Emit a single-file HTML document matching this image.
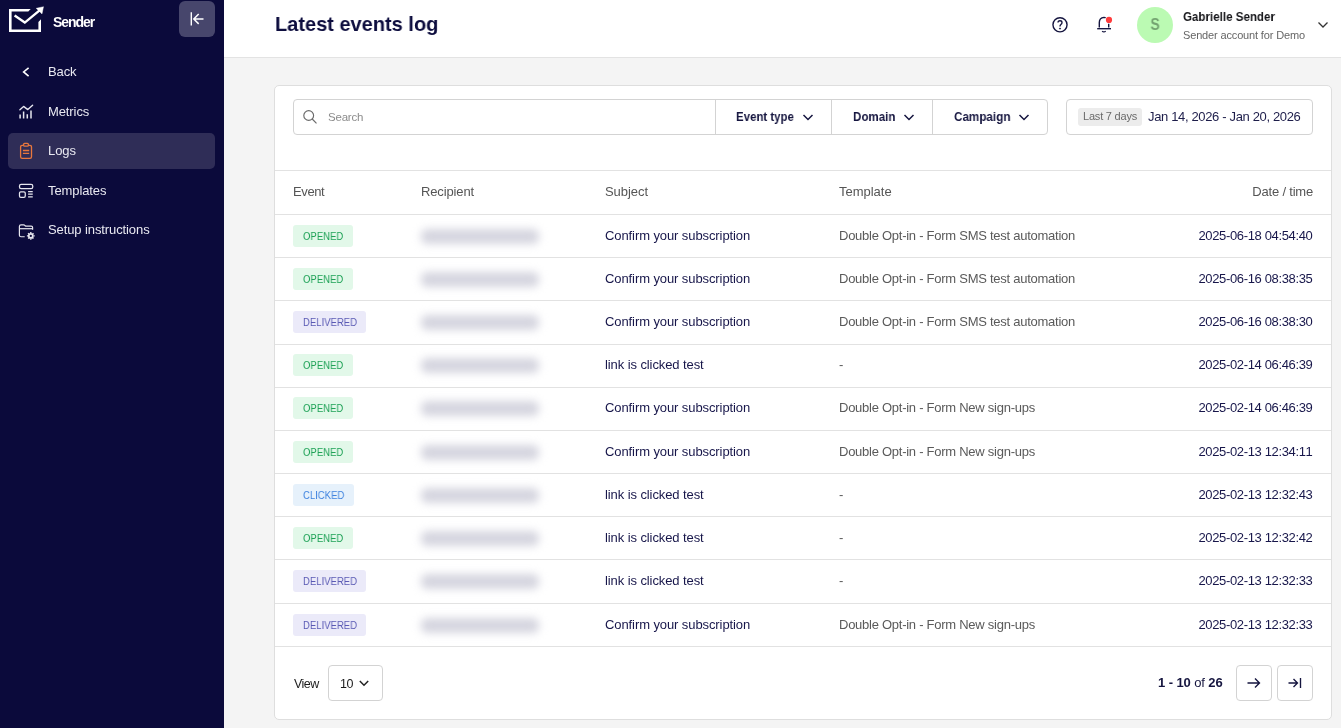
<!DOCTYPE html>
<html><head><meta charset="utf-8">
<style>
*{box-sizing:border-box;margin:0;padding:0}
html,body{width:1341px;height:728px;overflow:hidden;background:#f4f4f4;font-family:"Liberation Sans",sans-serif;font-variant-ligatures:none}
.a{position:absolute}
.t{position:absolute;white-space:nowrap;line-height:1;will-change:transform}
#side{position:absolute;left:0;top:0;width:224px;height:728px;background:#0b0a3b}
#hdr{position:absolute;left:224px;top:0;width:1117px;height:58px;background:#fff;border-bottom:1px solid #e3e3e3}
#card{position:absolute;left:274px;top:85px;width:1058px;height:635px;background:#fff;border:1px solid #dedede;border-radius:5px}
.nav{color:#e9e9f1;font-size:13px;letter-spacing:-0.1px}
.hl{position:absolute;left:275px;width:1056px;height:1px;background:#e2e2e2}
.th{color:#555;font-size:13px}
.sub{color:#17164a;font-size:13px;font-variant-ligatures:none}
.tpl{color:#5a5a5a;font-size:13px}
.dt{color:#17164a;font-size:13px;font-kerning:none}
.bd{position:absolute;left:293px;height:22px;border-radius:3px;font-size:11px;line-height:22px;padding:0 9.6px;white-space:nowrap}
.bd span{display:inline-block;transform:scaleX(0.865);transform-origin:0 50%;will-change:transform}
.op{background:#e2f8e9;color:#1fa257}
.dl{background:#ebeaf9;color:#5a5ab4}
.cl{background:#e6f1fb;color:#3f83df}
.blur{position:absolute;left:421px;width:118px;height:15px;background:#d5d5df;filter:blur(4px);border-radius:6px}
.btn{position:absolute;border:1px solid #d3d3d3;border-radius:4px;background:#fff}
.fl{color:#15153f;font-size:13px;font-weight:bold}
</style></head><body>

<div id="side">
  <!-- logo -->
  <svg class="a" style="left:0;top:0" width="100" height="40" viewBox="0 0 100 40">
    <path d="M9 9 H30.7 L28.3 11.6 H11.6 V29.4 H38.4 V21.9 L41 19.3 V32 H9 Z" fill="#fff"/>
    <path d="M14.6 15.6 L24.8 22.6 L40.8 9.4" fill="none" stroke="#fff" stroke-width="2.4"/>
    <path d="M36.2 8.3 L43.5 6.7 L42 13.9 Z" fill="#fff" stroke="#fff" stroke-width="0.4"/>
  </svg>
  <div class="t" style="left:53px;top:15px;font-size:14px;font-weight:bold;color:#fff;letter-spacing:-1.05px">Sender</div>
  <div class="a" style="left:179px;top:1px;width:36px;height:36px;background:#47466c;border-radius:6px"></div>
  <svg class="a" style="left:179px;top:1px" width="36" height="36" viewBox="0 0 36 36">
    <path d="M12.3 11.2 V24.6" stroke="#fff" stroke-width="1.4" fill="none"/>
    <path d="M14.8 18 H24.5 M19.7 12.9 L14.8 18 L19.7 22.9" stroke="#fff" stroke-width="1.5" fill="none"/>
  </svg>

  <div class="a" style="left:8px;top:133px;width:207px;height:36px;background:#2f2d57;border-radius:5px"></div>

  <svg class="a" style="left:18px;top:62px" width="18" height="18" viewBox="0 0 18 18"><path d="M10.6 5.9 L5.6 9.9 L10.6 14.1" stroke="#fff" stroke-width="1.55" fill="none"/></svg>
  <div class="t nav" style="left:48.2px;top:65px">Back</div>

  <svg class="a" style="left:18px;top:103px" width="18" height="18" viewBox="0 0 18 18" fill="none" stroke="#e6e6ee" stroke-width="1.4" stroke-linecap="round" stroke-linejoin="round">
    <path d="M1.9 6.7 L5.6 3.4 L9.8 6.6 L14.6 2.3"/>
    <path d="M2.1 11.4 V15.4 M5.6 8.4 V15.4 M9.3 11.2 V15.4 M13 7.6 V15.4" stroke-width="1.5" stroke-linecap="butt"/>
  </svg>
  <div class="t nav" style="left:48.2px;top:105px">Metrics</div>

  <svg class="a" style="left:18px;top:141px" width="18" height="20" viewBox="0 0 18 20" fill="none" stroke="#e8773d" stroke-width="1.3">
    <path d="M5.6 4.4 H4.2 Q2.6 4.4 2.6 6 V15.7 Q2.6 17.3 4.2 17.3 H11.9 Q13.5 17.3 13.5 15.7 V6 Q13.5 4.4 11.9 4.4 H10.2"/>
    <path d="M6.6 2.4 H9.4 Q10.4 2.4 10.4 3.4 V4.2 Q10.4 5.1 9.4 5.1 H6.6 Q5.6 5.1 5.6 4.2 V3.4 Q5.6 2.4 6.6 2.4 Z"/>
    <path d="M4.9 9.5 H11.2 M4.9 12.3 H11.2"/>
  </svg>
  <div class="t nav" style="left:48.2px;top:143.5px">Logs</div>

  <svg class="a" style="left:17px;top:181px" width="20" height="20" viewBox="0 0 20 20" fill="none" stroke="#e6e6ee" stroke-width="1.25">
    <rect x="2.5" y="3.4" width="13.25" height="4.1" rx="1.6"/>
    <rect x="2.5" y="10.75" width="5.75" height="5.55" rx="1.3"/>
    <path d="M11.1 10.5 H15.75 M11.1 13 H15.75 M11.1 15.75 H15.75"/>
  </svg>
  <div class="t nav" style="left:48.2px;top:184px">Templates</div>

  <svg class="a" style="left:17px;top:221px" width="22" height="22" viewBox="0 0 22 22" fill="none" stroke="#e6e6ee" stroke-width="1.2">
    <path d="M7.7 15.75 H4 Q2.4 15.75 2.4 14.2 V5.4 Q2.4 3.8 4 3.8 H6.6 Q7.4 3.8 7.9 4.5 L8.6 5.2 H14.2 Q15.6 5.2 15.6 6.6 V8.8"/>
    <path d="M2.4 7.7 H15.6"/>
    <circle cx="13.8" cy="14.9" r="2" stroke-width="1.7"/>
    <path d="M13.8 11 V12.2 M13.8 17.6 V18.8 M9.9 14.9 H11.1 M16.5 14.9 H17.7 M11.1 12.2 L11.9 13 M15.7 16.8 L16.5 17.6 M11.1 17.6 L11.9 16.8 M15.7 13 L16.5 12.2" stroke-width="1.4"/>
  </svg>
  <div class="t nav" style="left:48.2px;top:223px">Setup instructions</div>
</div>

<div id="hdr"></div>
<div class="t" style="left:275px;top:13px;font-size:21px;font-weight:bold;color:#0d0d3e;transform:scaleX(0.952);transform-origin:0 0">Latest events log</div>

<!-- header right -->
<svg class="a" style="left:1050px;top:15px" width="20" height="20" viewBox="0 0 20 20" fill="none" stroke="#15153f" stroke-width="1.4">
  <circle cx="10" cy="9.8" r="7.05"/>
  <path d="M8 7.6 Q8 5.7 10 5.7 Q12 5.7 12 7.5 Q12 8.7 10.9 9.5 Q10 10.2 10 11.6" stroke-width="1.35"/>
  <circle cx="10" cy="13.6" r="0.55" fill="#15153f" stroke-width="0.9"/>
</svg>
<svg class="a" style="left:1094px;top:15px" width="22" height="22" viewBox="0 0 22 22" fill="none" stroke="#15153f" stroke-width="1.4">
  <path d="M5.3 12.4 V7.6 Q5.3 2.7 10 2.4 Q14.7 2.7 14.7 7.6 V12.4"/>
  <path d="M3.2 13.7 H17"/>
  <path d="M8.1 16.2 Q9.9 17.5 11.7 16.2"/>
  <circle cx="15" cy="4.9" r="3.9" fill="#fff" stroke="none"/>
  <circle cx="15" cy="4.9" r="3.1" fill="#ff3b3b" stroke="none"/>
</svg>
<div class="a" style="left:1137px;top:7px;width:36px;height:36px;border-radius:50%;background:#bbfab3"></div>
<div class="t" style="left:1137px;top:17px;width:36px;text-align:center;font-size:16px;font-weight:bold;color:#74a371;transform:scaleX(0.87);transform-origin:50% 0">S</div>
<div class="t" style="left:1182.5px;top:10px;font-size:13px;font-weight:bold;color:#141418;transform:scaleX(0.89);transform-origin:0 0">Gabrielle Sender</div>
<div class="t" style="left:1182.5px;top:29.5px;font-size:11px;color:#666;letter-spacing:-0.15px">Sender account for Demo</div>
<svg class="a" style="left:1315px;top:18px" width="16" height="14" viewBox="0 0 16 14"><path d="M3.5 4.5 L8 9 L12.5 4.5" stroke="#333" stroke-width="1.3" fill="none"/></svg>

<div id="card"></div>

<!-- filter bar -->
<div class="btn" style="left:293px;top:99px;width:755px;height:36px"></div>
<div class="a" style="left:715px;top:100px;width:1px;height:34px;background:#d3d3d3"></div>
<div class="a" style="left:831px;top:100px;width:1px;height:34px;background:#d3d3d3"></div>
<div class="a" style="left:932px;top:100px;width:1px;height:34px;background:#d3d3d3"></div>
<svg class="a" style="left:300px;top:106px" width="22" height="22" viewBox="0 0 22 22" fill="none" stroke="#6a6a6a" stroke-width="1.15">
  <circle cx="8.7" cy="9.5" r="4.9"/><path d="M12.2 13 L16.5 17.3"/>
</svg>
<div class="t" style="left:328px;top:111.8px;font-size:11.5px;color:#8c8c8c;letter-spacing:-0.2px">Search</div>
<div class="t fl" style="left:736px;top:109.5px;transform:scaleX(0.881);transform-origin:0 0">Event type</div>
<div class="t fl" style="left:852.5px;top:109.5px;transform:scaleX(0.889);transform-origin:0 0">Domain</div>
<div class="t fl" style="left:953.5px;top:109.5px;transform:scaleX(0.898);transform-origin:0 0">Campaign</div>
<svg class="a" style="left:801px;top:110px" width="14" height="14" viewBox="0 0 14 14"><path d="M2.5 5 L7 9.5 L11.5 5" stroke="#15153f" stroke-width="1.5" fill="none"/></svg>
<svg class="a" style="left:902px;top:110px" width="14" height="14" viewBox="0 0 14 14"><path d="M2.5 5 L7 9.5 L11.5 5" stroke="#15153f" stroke-width="1.5" fill="none"/></svg>
<svg class="a" style="left:1017px;top:110px" width="14" height="14" viewBox="0 0 14 14"><path d="M2.5 5 L7 9.5 L11.5 5" stroke="#15153f" stroke-width="1.5" fill="none"/></svg>

<div class="btn" style="left:1066px;top:99px;width:247px;height:36px"></div>
<div class="a" style="left:1078px;top:108px;width:64px;height:18px;background:#ececec;border-radius:3px"></div>
<div class="t" style="left:1083px;top:111px;font-size:11px;color:#6a6a6a;letter-spacing:-0.2px">Last 7 days</div>
<div class="t" style="left:1148px;top:109.5px;font-size:13px;color:#1d1d4a;letter-spacing:-0.35px">Jan 14, 2026 - Jan 20, 2026</div>

<!-- table -->
<div class="hl" style="top:170px"></div>
<div class="hl" style="top:214px"></div>
<div class="t th" style="left:293px;top:185px;letter-spacing:-0.38px">Event</div>
<div class="t th" style="left:420.5px;top:185px;letter-spacing:-0.13px">Recipient</div>
<div class="t th" style="left:605px;top:185px;letter-spacing:-0.05px">Subject</div>
<div class="t th" style="left:839.3px;top:185px;letter-spacing:-0.02px">Template</div>
<div class="t th" style="left:1150px;top:185px;width:163px;text-align:right;letter-spacing:-0.2px">Date / time</div>

<!--ROWS-->
<div class="hl" style="top:257px"></div>
<div class="bd op" style="top:225.0px;width:60px"><span>OPENED</span></div>
<div class="blur" style="top:228.5px"></div>
<div class="t sub" style="left:605.3px;top:228.8px;letter-spacing:-0.09px">Confirm your subscription</div>
<div class="t tpl" style="left:838.7px;top:228.8px;letter-spacing:-0.26px">Double Opt-in - Form SMS test automation</div>
<div class="t dt" style="left:1100px;width:212.5px;text-align:right;top:228.8px;letter-spacing:-0.35px">2025-06-18 04:54:40</div>
<div class="hl" style="top:300px"></div>
<div class="bd op" style="top:268.0px;width:60px"><span>OPENED</span></div>
<div class="blur" style="top:271.5px"></div>
<div class="t sub" style="left:605.3px;top:271.8px;letter-spacing:-0.09px">Confirm your subscription</div>
<div class="t tpl" style="left:838.7px;top:271.8px;letter-spacing:-0.26px">Double Opt-in - Form SMS test automation</div>
<div class="t dt" style="left:1100px;width:212.5px;text-align:right;top:271.8px;letter-spacing:-0.35px">2025-06-16 08:38:35</div>
<div class="hl" style="top:344px"></div>
<div class="bd dl" style="top:311.0px;width:73px"><span>DELIVERED</span></div>
<div class="blur" style="top:314.5px"></div>
<div class="t sub" style="left:605.3px;top:314.8px;letter-spacing:-0.09px">Confirm your subscription</div>
<div class="t tpl" style="left:838.7px;top:314.8px;letter-spacing:-0.26px">Double Opt-in - Form SMS test automation</div>
<div class="t dt" style="left:1100px;width:212.5px;text-align:right;top:314.8px;letter-spacing:-0.35px">2025-06-16 08:38:30</div>
<div class="hl" style="top:387px"></div>
<div class="bd op" style="top:354.0px;width:60px"><span>OPENED</span></div>
<div class="blur" style="top:357.5px"></div>
<div class="t sub" style="left:605.3px;top:357.8px;letter-spacing:-0.09px">link is clicked test</div>
<div class="t tpl" style="left:838.7px;top:357.8px;letter-spacing:-0.26px">-</div>
<div class="t dt" style="left:1100px;width:212.5px;text-align:right;top:357.8px;letter-spacing:-0.35px">2025-02-14 06:46:39</div>
<div class="hl" style="top:430px"></div>
<div class="bd op" style="top:397.0px;width:60px"><span>OPENED</span></div>
<div class="blur" style="top:400.5px"></div>
<div class="t sub" style="left:605.3px;top:400.8px;letter-spacing:-0.09px">Confirm your subscription</div>
<div class="t tpl" style="left:838.7px;top:400.8px;letter-spacing:-0.26px">Double Opt-in - Form New sign-ups</div>
<div class="t dt" style="left:1100px;width:212.5px;text-align:right;top:400.8px;letter-spacing:-0.35px">2025-02-14 06:46:39</div>
<div class="hl" style="top:473px"></div>
<div class="bd op" style="top:441.0px;width:60px"><span>OPENED</span></div>
<div class="blur" style="top:444.5px"></div>
<div class="t sub" style="left:605.3px;top:444.8px;letter-spacing:-0.09px">Confirm your subscription</div>
<div class="t tpl" style="left:838.7px;top:444.8px;letter-spacing:-0.26px">Double Opt-in - Form New sign-ups</div>
<div class="t dt" style="left:1100px;width:212.5px;text-align:right;top:444.8px;letter-spacing:-0.35px">2025-02-13 12:34:11</div>
<div class="hl" style="top:516px"></div>
<div class="bd cl" style="top:484.0px;width:61px"><span>CLICKED</span></div>
<div class="blur" style="top:487.5px"></div>
<div class="t sub" style="left:605.3px;top:487.8px;letter-spacing:-0.09px">link is clicked test</div>
<div class="t tpl" style="left:838.7px;top:487.8px;letter-spacing:-0.26px">-</div>
<div class="t dt" style="left:1100px;width:212.5px;text-align:right;top:487.8px;letter-spacing:-0.35px">2025-02-13 12:32:43</div>
<div class="hl" style="top:559px"></div>
<div class="bd op" style="top:527.0px;width:60px"><span>OPENED</span></div>
<div class="blur" style="top:530.5px"></div>
<div class="t sub" style="left:605.3px;top:530.8px;letter-spacing:-0.09px">link is clicked test</div>
<div class="t tpl" style="left:838.7px;top:530.8px;letter-spacing:-0.26px">-</div>
<div class="t dt" style="left:1100px;width:212.5px;text-align:right;top:530.8px;letter-spacing:-0.35px">2025-02-13 12:32:42</div>
<div class="hl" style="top:603px"></div>
<div class="bd dl" style="top:570.0px;width:73px"><span>DELIVERED</span></div>
<div class="blur" style="top:573.5px"></div>
<div class="t sub" style="left:605.3px;top:573.8px;letter-spacing:-0.09px">link is clicked test</div>
<div class="t tpl" style="left:838.7px;top:573.8px;letter-spacing:-0.26px">-</div>
<div class="t dt" style="left:1100px;width:212.5px;text-align:right;top:573.8px;letter-spacing:-0.35px">2025-02-13 12:32:33</div>
<div class="hl" style="top:646px"></div>
<div class="bd dl" style="top:614.0px;width:73px"><span>DELIVERED</span></div>
<div class="blur" style="top:617.5px"></div>
<div class="t sub" style="left:605.3px;top:617.8px;letter-spacing:-0.09px">Confirm your subscription</div>
<div class="t tpl" style="left:838.7px;top:617.8px;letter-spacing:-0.26px">Double Opt-in - Form New sign-ups</div>
<div class="t dt" style="left:1100px;width:212.5px;text-align:right;top:617.8px;letter-spacing:-0.35px">2025-02-13 12:32:33</div>
<!--/ROWS-->

<!-- footer -->
<div class="t" style="left:293.5px;top:677.7px;font-size:12.5px;color:#1c1c1c;letter-spacing:-0.55px">View</div>
<div class="btn" style="left:328px;top:665px;width:55px;height:36px"></div>
<div class="t" style="left:339.8px;top:677.7px;font-size:12.5px;color:#1c1c1c;letter-spacing:-0.4px">10</div>
<svg class="a" style="left:357px;top:676px" width="14" height="14" viewBox="0 0 14 14"><path d="M2.8 5 L7 9.2 L11.2 5" stroke="#222" stroke-width="1.5" fill="none"/></svg>
<div class="t" style="left:1158px;top:676px;font-size:13px;color:#15153f;letter-spacing:-0.1px"><b>1 - 10</b> of <b>26</b></div>
<div class="btn" style="left:1236px;top:665px;width:36px;height:36px"></div>
<div class="btn" style="left:1277px;top:665px;width:36px;height:36px"></div>
<svg class="a" style="left:1236px;top:665px" width="36" height="36" viewBox="0 0 36 36" fill="none" stroke="#15153f" stroke-width="1.35"><path d="M11.5 18 H23.5 M19 13.5 L23.5 18 L19 22.5"/></svg>
<svg class="a" style="left:1277px;top:665px" width="36" height="36" viewBox="0 0 36 36" fill="none" stroke="#15153f" stroke-width="1.35"><path d="M11.5 18 H20.5 M16.5 14 L20.5 18 L16.5 22 M23.5 13 V23"/></svg>

</body></html>
